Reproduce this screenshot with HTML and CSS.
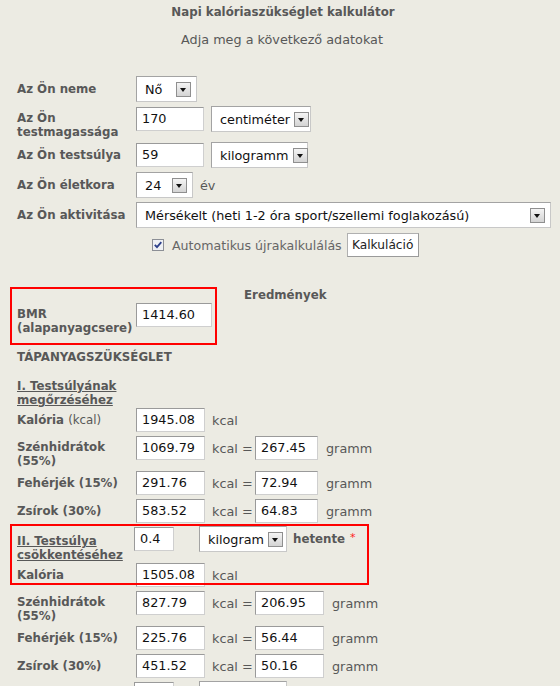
FILE: index.html
```html
<!DOCTYPE html>
<html lang="hu">
<head>
<meta charset="utf-8">
<title>Napi kalóriaszükséglet kalkulátor</title>
<link rel="stylesheet" href="styles.css">
</head>
<body>
<div class="page">
  <h1 class="title">Napi kalóriaszükséglet kalkulátor</h1>
  <p class="subtitle">Adja meg a következő adatokat</p>

  <div class="form">
    <div class="row">
      <div class="label">Az Ön neme</div>
      <div class="ctrls">
        <div class="sel w-neme"><span>Nő</span><i class="arrow"></i></div>
      </div>
    </div>
    <div class="row tall">
      <div class="label">Az Ön testmagassága</div>
      <div class="ctrls">
        <div class="inp w-68">170</div>
        <div class="sel w-cm gap7"><span>centiméter</span><i class="arrow"></i></div>
      </div>
    </div>
    <div class="row">
      <div class="label">Az Ön testsúlya</div>
      <div class="ctrls">
        <div class="inp w-68">59</div>
        <div class="sel w-kg gap7"><span>kilogramm</span><i class="arrow"></i></div>
      </div>
    </div>
    <div class="row">
      <div class="label">Az Ön életkora</div>
      <div class="ctrls">
        <div class="sel w-age"><span>24</span><i class="arrow"></i></div>
        <span class="unit">év</span>
      </div>
    </div>
    <div class="row">
      <div class="label">Az Ön aktivitása</div>
      <div class="ctrls">
        <div class="sel w-act"><span>Mérsékelt (heti 1-2 óra sport/szellemi foglakozású)</span><i class="arrow"></i></div>
      </div>
    </div>
    <div class="checkrow">
      <svg class="check" width="12" height="12" viewBox="0 0 12 12"><rect x="0.5" y="0.5" width="11" height="11" fill="#eef0f4" stroke="#8c8f96"/><path d="M2.8 5.8 L5 8.2 L9.3 3.2" fill="none" stroke="#2c3f8a" stroke-width="1.8"/></svg>
      <span class="checktext">Automatikus újrakalkulálás</span>
      <div class="btn">Kalkuláció</div>
    </div>
  </div>

  <div class="results">
    <div class="res-head">Eredmények</div>
    <div class="row tall">
      <div class="label">BMR (alapanyagcsere)</div>
      <div class="ctrls"><div class="inp w-bmr">1414.60</div></div>
    </div>
    <div class="section">TÁPANYAGSZÜKSÉGLET</div>
    <div class="sub"><u>I. Testsúlyának megőrzéséhez</u></div>

    <div class="row">
      <div class="label">Kalória <span class="light">(kcal)</span></div>
      <div class="ctrls"><div class="inp w-69">1945.08</div><span class="unit">kcal</span></div>
    </div>
    <div class="row tall2">
      <div class="label">Szénhidrátok (55%)</div>
      <div class="ctrls"><div class="inp w-69">1069.79</div><span class="unit eq">kcal =</span><div class="inp w-63">267.45</div><span class="unit g">gramm</span></div>
    </div>
    <div class="row">
      <div class="label">Fehérjék (15%)</div>
      <div class="ctrls"><div class="inp w-69">291.76</div><span class="unit eq">kcal =</span><div class="inp w-63">72.94</div><span class="unit g">gramm</span></div>
    </div>
    <div class="row">
      <div class="label">Zsírok (30%)</div>
      <div class="ctrls"><div class="inp w-69">583.52</div><span class="unit eq">kcal =</span><div class="inp w-63">64.83</div><span class="unit g">gramm</span></div>
    </div>

    <div class="row goal">
      <div class="label"><u>II. Testsúlya csökkentéséhez</u></div>
      <div class="ctrls shift"><div class="inp w-40">0.4</div><div class="sel w-kilo gap25"><span>kilogram</span><i class="arrow"></i></div><span class="unit bold">hetente</span><span class="star">*</span></div>
    </div>
    <div class="row">
      <div class="label">Kalória</div>
      <div class="ctrls"><div class="inp w-69">1505.08</div><span class="unit">kcal</span></div>
    </div>
    <div class="row tall2">
      <div class="label">Szénhidrátok (55%)</div>
      <div class="ctrls"><div class="inp w-69">827.79</div><span class="unit eq">kcal =</span><div class="inp w-69">206.95</div><span class="unit g">gramm</span></div>
    </div>
    <div class="row">
      <div class="label">Fehérjék (15%)</div>
      <div class="ctrls"><div class="inp w-69">225.76</div><span class="unit eq">kcal =</span><div class="inp w-69">56.44</div><span class="unit g">gramm</span></div>
    </div>
    <div class="row">
      <div class="label">Zsírok (30%)</div>
      <div class="ctrls"><div class="inp w-69">451.52</div><span class="unit eq">kcal =</span><div class="inp w-69">50.16</div><span class="unit g">gramm</span></div>
    </div>
    <div class="row goal">
      <div class="label"></div>
      <div class="ctrls shift"><div class="inp w-40"></div><div class="sel w-kilo gap25"></div></div>
    </div>

    <div class="mark mark-bmr"></div>
    <div class="mark mark-goal"></div>
  </div>
</div>
</body>
</html>
```

FILE: styles.css
```css
html, body {
  margin: 0;
  padding: 0;
}
body {
  background: #ecebe3;
  color: #585858;
  font-family: "DejaVu Sans", Verdana, sans-serif;
  font-size: 12.8px;
  overflow: hidden;
  height: 686px;
}
.page {
  width: 560px;
}
.title {
  margin: 4px 0 0;
  font-size: 11.8px;
  line-height: 16px;
  font-weight: bold;
  text-align: center;
  padding-left: 6px;
}
.subtitle {
  margin: 12px 0 0;
  line-height: 16px;
  text-align: center;
  padding-left: 4px;
}
.form {
  margin-top: 29px;
  padding-left: 17px;
}
.row {
  display: flex;
  align-items: flex-start;
  margin-bottom: 6px;
}
.label {
  width: 119px;
  flex: none;
  font-weight: bold;
  font-size: 11.8px;
  line-height: 14px;
  padding-top: 5px;
  box-sizing: border-box;
}
.row.tall .label,
.row.tall2 .label {
  padding-top: 4px;
}
.row.tall { margin-bottom: 4px; }
.ctrls {
  display: flex;
  align-items: center;
  height: 24px;
}
.inp {
  box-sizing: border-box;
  height: 24px;
  background: #fff;
  border: 1px solid;
  border-color: #9a9a9a #cfcfcf #cfcfcf #9a9a9a;
  color: #111;
  padding: 0 5px;
  line-height: 22px;
  white-space: nowrap;
  overflow: hidden;
}
.sel {
  box-sizing: border-box;
  height: 26px;
  margin: -1px 0;
  background: #fff;
  border: 1px solid;
  border-color: #a3a3a3 #c8c8c8 #c8c8c8 #a3a3a3;
  color: #111;
  display: flex;
  align-items: center;
  padding: 0 5px 0 8px;
  white-space: nowrap;
}
.sel span { flex: 1; }
.arrow {
  flex: none;
  width: 15px;
  height: 15px;
  box-sizing: border-box;
  border: 1px solid #8f8f8f;
  background: linear-gradient(#f4f4f4, #d4d4d4);
  position: relative;
  margin-left: 4px;
}
.arrow::after {
  content: "";
  position: absolute;
  left: 3px;
  top: 5px;
  border-left: 3.5px solid transparent;
  border-right: 3.5px solid transparent;
  border-top: 4px solid #111;
}
.w-neme { width: 61px; }
.w-68 { width: 68px; }
.w-cm { width: 100px; }
.w-kg { width: 97px; }
.w-age { width: 57px; }
.w-act { width: 415px; }
.w-bmr { width: 76px; }
.w-69 { width: 69px; }
.w-63 { width: 63px; }
.w-40 { width: 40px; }
.w-kilo { width: 88px; }
.gap7 { margin-left: 7px; }
.gap25 { margin-left: 25px; }
.unit {
  margin-left: 7px;
  white-space: nowrap;
}
.unit.eq {
  width: 43px;
  flex: none;
}
.unit.g { margin-left: 8px; }
.unit.bold {
  font-weight: bold;
  font-size: 11.8px;
  margin-left: 6px;
}
.star {
  color: #ff2020;
  margin-left: 5px;
  align-self: flex-start;
  margin-top: 4px;
  font-size: 11px;
}
.light { font-weight: normal; }
.checkrow {
  display: flex;
  align-items: center;
  height: 24px;
  padding-left: 135px;
}
.check { flex: none; }
.checktext {
  margin-left: 8px;
  color: #666;
  font-size: 12.6px;
}
.btn {
  margin-left: 5px;
  height: 24px;
  box-sizing: border-box;
  width: 72px;
  background: #fff;
  border: 1px solid;
  border-color: #b0b0b0 #9a9a9a #9a9a9a #b0b0b0;
  color: #222;
  font-size: 12.2px;
  line-height: 22px;
  text-align: center;
}
.results {
  position: relative;
  margin-top: 30px;
  padding-left: 17px;
}
.res-head {
  font-weight: bold;
  font-size: 11.8px;
  line-height: 16px;
  padding-left: 227px;
}
.section {
  font-weight: bold;
  font-size: 11.8px;
  line-height: 16px;
  margin-top: 12px;
}
.sub {
  font-weight: bold;
  font-size: 11.8px;
  line-height: 14px;
  margin-top: 14px;
  width: 119px;
  margin-bottom: 1px;
}
.sub u, .label u {
  text-decoration-thickness: 1px;
  text-underline-offset: 1px;
}
.row.tall2 { margin-bottom: 3px; }
.results .row { margin-bottom: 4px; }
.results .row.tall2 { margin-bottom: 3px; }
.results .row.tall { margin-bottom: 14px; }
.row.goal .label { padding-top: 7px; }
.results .row.goal { margin-bottom: 1px; }
.shift { margin-left: -2px; }
.mark {
  position: absolute;
  border: 2px solid #ff0000;
  box-sizing: border-box;
  pointer-events: none;
}
.mark-bmr {
  left: 10px;
  top: 0;
  width: 207px;
  height: 58px;
}
.mark-goal {
  left: 10px;
  top: 237px;
  width: 359px;
  height: 61px;
}
```
